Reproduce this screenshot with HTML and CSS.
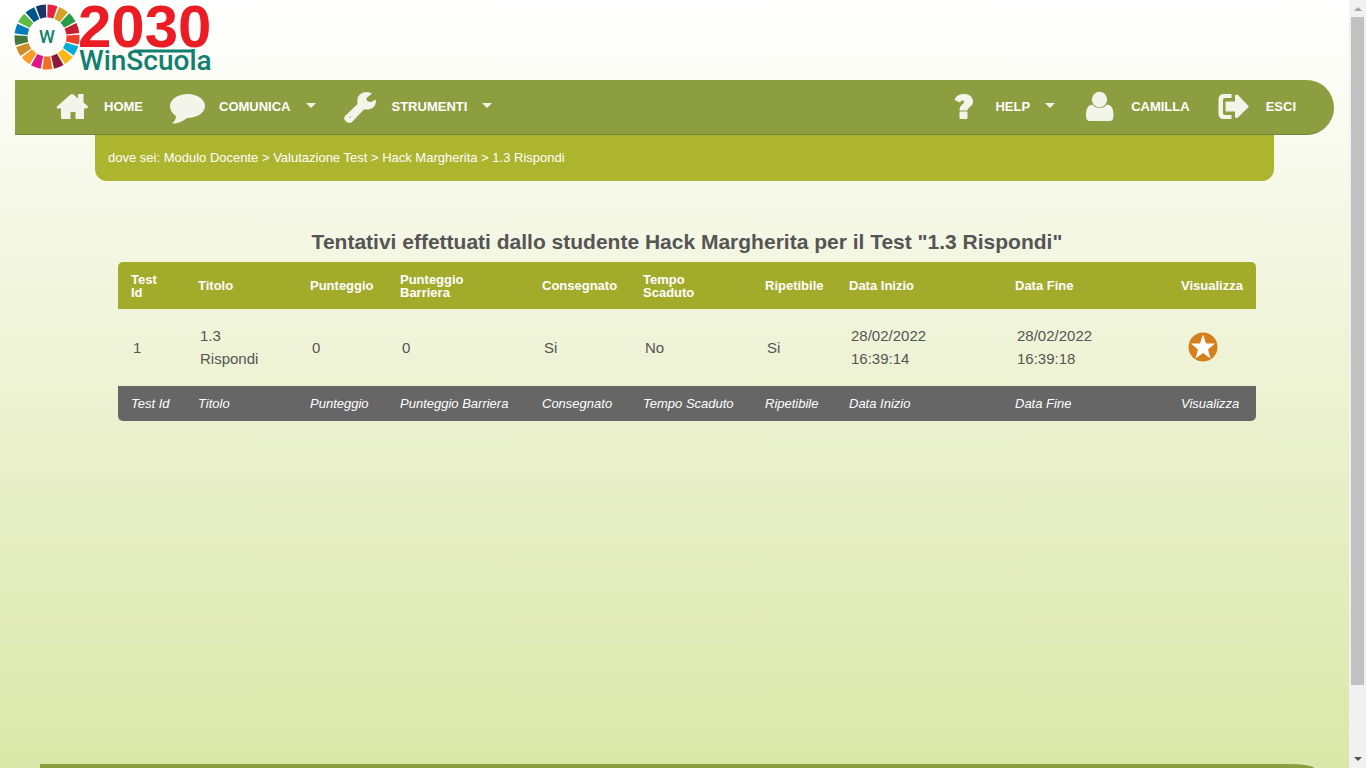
FILE: index.html
```
<!DOCTYPE html>
<html lang="it">
	<head>
		<meta charset="utf-8">
		<title>WinScuola</title>
		<link rel="stylesheet" href="styles.css">
	</head>
	<body>
		<div class="page">
			<header>
				<a href="#" class="logo">
					<svg width="200" height="72" viewBox="0 0 200 72" role="img" aria-label="2030 WinScuola">
						<g class="wheel" transform="rotate(-89 32 37)">
							<circle cx="32" cy="37" r="26" stroke="#e5243b" stroke-dashoffset="0" pathLength="170"/>
							<circle cx="32" cy="37" r="26" stroke="#d3a029" stroke-dashoffset="-10" pathLength="170"/>
							<circle cx="32" cy="37" r="26" stroke="#279b48" stroke-dashoffset="-20" pathLength="170"/>
							<circle cx="32" cy="37" r="26" stroke="#c31f33" stroke-dashoffset="-30" pathLength="170"/>
							<circle cx="32" cy="37" r="26" stroke="#ef402b" stroke-dashoffset="-40" pathLength="170"/>
							<circle cx="32" cy="37" r="26" stroke="#00aed9" stroke-dashoffset="-50" pathLength="170"/>
							<circle cx="32" cy="37" r="26" stroke="#fdb713" stroke-dashoffset="-60" pathLength="170"/>
							<circle cx="32" cy="37" r="26" stroke="#8f1838" stroke-dashoffset="-70" pathLength="170"/>
							<circle cx="32" cy="37" r="26" stroke="#f36d25" stroke-dashoffset="-80" pathLength="170"/>
							<circle cx="32" cy="37" r="26" stroke="#e11484" stroke-dashoffset="-90" pathLength="170"/>
							<circle cx="32" cy="37" r="26" stroke="#f99d26" stroke-dashoffset="-100" pathLength="170"/>
							<circle cx="32" cy="37" r="26" stroke="#cf8d2a" stroke-dashoffset="-110" pathLength="170"/>
							<circle cx="32" cy="37" r="26" stroke="#48773e" stroke-dashoffset="-120" pathLength="170"/>
							<circle cx="32" cy="37" r="26" stroke="#007dbc" stroke-dashoffset="-130" pathLength="170"/>
							<circle cx="32" cy="37" r="26" stroke="#5dbb46" stroke-dashoffset="-140" pathLength="170"/>
							<circle cx="32" cy="37" r="26" stroke="#02558b" stroke-dashoffset="-150" pathLength="170"/>
							<circle cx="32" cy="37" r="26" stroke="#183668" stroke-dashoffset="-160" pathLength="170"/>
						</g>
						<text class="logo-w" x="32" y="43" text-anchor="middle">W</text>
						<text class="logo-year" x="63" y="47">2030</text>
						<text class="logo-name" x="64" y="70">WinScuola</text>
						<path class="logo-bar" d="M119 51H177"/>
					</svg>
				</a>
			</header>

			<nav class="menu">
				<a href="#">
					<svg class="icon" viewBox="0 0 36 36"><path d="M3 18.500L16.500 6.500Q18 5.500 19.500 6.500L24 10.500V6H29.500V14.500L34 18.500Q34 20.500 30 20.500V31H21.500V24H16.500V31H8Q7 31 7 29V20.500H3Q2 20 3 18.500Z"/></svg>
					<span>HOME</span>
				</a>
				<a href="#">
					<svg class="icon" viewBox="0 0 36 36"><path d="M18.500 6C28 6 36 11 36 18S28 30 18 30C14 33 9 36 3 35.500Q7 32 7 28C3 25.500 1 22 1 18C1 11 9 6 18.500 6Z"/></svg>
					<span>COMUNICA</span>
					<i class="caret"></i>
				</a>
				<a href="#">
					<svg class="icon" viewBox="0 0 36 36"><path fill-rule="evenodd" d="M30 5.500L24.500 10Q24 14 29 14L34 11.500Q34.500 20 27 21.500L22 21.500L10 34Q7 36 4 33.500Q1 31 3 28L15.500 16Q14 7 21 4.500Q26 3 30 5.500ZM8 28.500a.7 .7 0 1 0 0 1.400a.7 .7 0 1 0 0-1.400Z"/></svg>
					<span>STRUMENTI</span>
					<i class="caret"></i>
				</a>
				<a href="#" class="right">
					<svg class="icon" viewBox="0 0 36 36"><path d="M9.500 12C11 7.500 15 6 19 6C24.500 6 28 9 28 13.500C28 19 22.500 19 22.500 22.500H14.500C14.500 16.500 19 16.500 19 14C19 12 16.500 12 15 14.500Z"/><rect x="14.500" y="23.500" width="8" height="7.500" rx="1"/></svg>
					<span>HELP</span>
					<i class="caret"></i>
				</a>
				<a href="#">
					<svg class="icon" viewBox="0 0 36 36"><path d="M11.500 16.500C6 17 5 22 5 28Q5 33 9 33H28.500Q32.500 33 32.500 28C32.500 22 31.500 17 26 16.500Q23 20 18.500 20Q14 20 11.500 16.500Z"/><circle cx="18.500" cy="11.500" r="7.700"/></svg>
					<span>CAMILLA</span>
				</a>
				<a href="#">
					<svg class="icon" viewBox="0 0 36 36"><path d="M8 6H15.500V10H9Q7 10 7 12V25Q7 27 9 27H15.500V31H8Q2.500 31 2.500 25.500V11.500Q2.500 6 8 6Z"/><path d="M10 13.500H19V7.500Q20 6 22 7L33 18.500L22 29.500Q20 30.500 19 29V23.500H10Q9.500 23.500 9.500 22V15Q9.500 13.500 10 13.500Z"/></svg>
					<span>ESCI</span>
				</a>
			</nav>

			<div class="breadcrumb">dove sei: Modulo Docente &gt; Valutazione Test &gt; Hack Margherita &gt; 1.3 Rispondi</div>

			<main>
				<h1>Tentativi effettuati dallo studente Hack Margherita per il Test "1.3 Rispondi"</h1>
				<table>
					<colgroup>
						<col class="c-id"><col class="c-titolo"><col class="c-punti"><col class="c-barriera"><col class="c-cons"><col class="c-tempo"><col class="c-rip"><col class="c-data"><col class="c-data"><col>
					</colgroup>
					<thead>
						<tr>
							<th>Test<br>Id</th>
							<th>Titolo</th>
							<th>Punteggio</th>
							<th>Punteggio<br>Barriera</th>
							<th>Consegnato</th>
							<th>Tempo<br>Scaduto</th>
							<th>Ripetibile</th>
							<th>Data Inizio</th>
							<th>Data Fine</th>
							<th>Visualizza</th>
						</tr>
					</thead>
					<tbody>
						<tr>
							<td>1</td>
							<td>1.3<br>Rispondi</td>
							<td>0</td>
							<td>0</td>
							<td>Si</td>
							<td>No</td>
							<td>Si</td>
							<td>28/02/2022<br>16:39:14</td>
							<td>28/02/2022<br>16:39:18</td>
							<td class="view">
								<a href="#" aria-label="Visualizza">
									<svg width="30" height="30" viewBox="0 0 30 30"><circle cx="15" cy="15" r="14.500" fill="#d4811b"/><path fill="#fff" d="M15 2.500L18 11.500H27L20 17.500L22.500 26.500L15 21L7.500 26.500L10 17.500L3 11.500H12Z"/></svg>
								</a>
							</td>
						</tr>
					</tbody>
					<tfoot>
						<tr>
							<td>Test Id</td>
							<td>Titolo</td>
							<td>Punteggio</td>
							<td>Punteggio Barriera</td>
							<td>Consegnato</td>
							<td>Tempo Scaduto</td>
							<td>Ripetibile</td>
							<td>Data Inizio</td>
							<td>Data Fine</td>
							<td>Visualizza</td>
						</tr>
					</tfoot>
				</table>
			</main>

			<footer></footer>
		</div>

		<div class="scrollbar">
			<i class="arrow up"></i>
			<div class="track"><div class="thumb"></div></div>
			<i class="arrow down"></i>
		</div>
	</body>
</html>
```
FILE: styles.css
```
* {
	box-sizing: border-box;
}
body {
	margin: 0;
	display: flex;
	height: 100vh;
	overflow: hidden;
	font-family: "Liberation Sans", Arial, sans-serif;
	font-size: 13px;
	color: #555;
}
.page {
	flex: 1;
	display: flex;
	flex-direction: column;
	padding: 0 15px;
	background: linear-gradient(#fff, #f5f8e6 28%, #ebf1cf 55%, #dbe7a8);
}
header {
	height: 80px;
}
.logo {
	display: block;
}
.logo svg {
	display: block;
	overflow: visible;
}
.wheel circle {
	fill: none;
	stroke-width: 13;
	stroke-dasharray: 8.500 161.500;
}
.logo-w {
	font: 500 18px Roboto, sans-serif;
	fill: #12806f;
}
.logo-year {
	font: bold 60px "Liberation Sans", Arial, sans-serif;
	fill: #ec1c24;
}
.logo-name {
	font: 500 28px Roboto, sans-serif;
	fill: #12806f;
}
.logo-bar {
	fill: none;
	stroke: #12806f;
	stroke-width: 3;
}

/* menu */
.menu {
	display: flex;
	align-items: center;
	gap: 26px;
	height: 55px;
	flex-shrink: 0;
	padding: 0 38px 2px 39px;
	background: #8d9e40;
	border-bottom: 1px solid #74843a;
	border-radius: 0 28px 28px 0;
}
.menu a {
	display: flex;
	align-items: center;
	color: #fff;
	font-weight: bold;
	text-decoration: none;
}
.menu .right {
	margin-left: auto;
}
.icon {
	width: 36px;
	height: 36px;
	margin-right: 14px;
	fill: #f3f4ea;
}
.caret {
	margin: 0 0 2px 15px;
	border: 5px solid transparent;
	border-top-color: #f3f4ea;
	border-bottom: 0;
}
.breadcrumb {
	margin: 0 60px 0 80px;
	height: 46px;
	flex-shrink: 0;
	padding-left: 13px;
	line-height: 45px;
	background: #adb52e;
	color: #fff;
	border-radius: 0 0 12px 12px;
}

/* attempts table */
main {
	flex: 1;
	padding: 48px 78px 0 103px;
}
h1 {
	margin: 0 0 7px;
	font-size: 21px;
	line-height: 26px;
	text-align: center;
}
table {
	width: 100%;
	table-layout: fixed;
	border-spacing: 0;
	text-align: left;
	white-space: nowrap;
}
.c-id { width: 67px; }
.c-titolo { width: 112px; }
.c-punti { width: 90px; }
.c-barriera { width: 142px; }
.c-cons { width: 101px; }
.c-tempo { width: 122px; }
.c-rip { width: 84px; }
.c-data { width: 166px; }
th {
	height: 47px;
	padding: 0 0 0 13px;
	background: #a3ab2b;
	color: #fff;
	line-height: 13px;
}
tbody td {
	height: 77px;
	padding: 0 0 1px 15px;
	font-size: 15px;
	line-height: 23px;
}
tfoot td {
	height: 35px;
	padding: 0 0 0 13px;
	background: #666;
	color: #fff;
	font-style: italic;
}
thead th:first-child { border-top-left-radius: 5px; }
thead th:last-child { border-top-right-radius: 5px; }
tfoot td:first-child { border-bottom-left-radius: 5px; }
tfoot td:last-child { border-bottom-right-radius: 5px; }
tbody .view {
	padding-left: 20px;
}
.view svg {
	display: block;
}
footer {
	height: 4px;
	margin: 0 20px 0 25px;
	background: #8d9e40;
	border-top-right-radius: 28px 4px;
}

/* scroll bar column */
.scrollbar {
	display: flex;
	flex-direction: column;
	align-items: center;
	width: 17px;
	padding: 7px 0;
	background: #f1f1f1;
}
.track {
	flex: 1;
	padding: 6px 0;
}
.thumb {
	width: 13px;
	height: 91%;
	background: #c1c1c1;
}
.arrow {
	border: 4px solid transparent;
}
.up {
	border-top: 0;
	border-bottom-color: #a3a3a3;
}
.down {
	border-bottom: 0;
	border-top-color: #505050;
}
```
